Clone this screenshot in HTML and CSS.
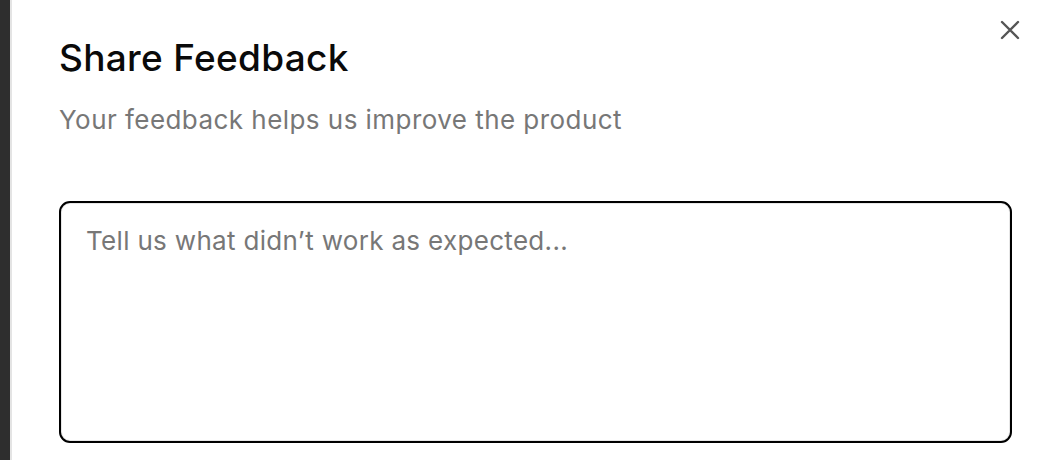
FILE: index.html
```html
<!DOCTYPE html>
<html lang="en">
<head>
<meta charset="utf-8">
<title>Share Feedback</title>
<link rel="stylesheet" href="styles.css">
</head>
<body>
<div class="page">
  <div class="backdrop"></div>
  <section class="modal">
    <button class="close" aria-label="Close">
      <svg width="22" height="22" viewBox="0 0 22 22" fill="none" stroke="#555" stroke-width="2.4" stroke-linecap="round">
        <path d="M3 3L19 19M19 3L3 19"/>
      </svg>
    </button>
    <h1 class="title">Share Feedback</h1>
    <p class="subtitle">Your feedback helps us improve the product</p>
    <textarea class="field" placeholder="Tell us what didn’t work as expected..."></textarea>
  </section>
</div>
</body>
</html>
```
FILE: styles.css
```css
* { box-sizing: border-box; }
html, body { margin: 0; padding: 0; background: #fff; }
body { font-family: Inter, "Noto Sans", sans-serif; }
.page { display: flex; height: 460px; overflow: hidden; }
.backdrop { width: 12px; flex: none; background: #2e2e2e; border-right: 2px solid #e4e4e4; }
.modal { flex: 1; position: relative; padding: 36px 35px 0 47px; }
.close { position: absolute; top: 19px; right: 37px; width: 22px; height: 22px; padding: 0; border: 0; background: none; }
.close svg { display: block; }
.title { margin: 0; font-size: 37px; line-height: 44px; font-weight: 500; letter-spacing: 0.3px; color: #0a0a0a; }
.subtitle { margin: 23px 0 0; font-size: 26px; line-height: 34px; font-weight: 400; letter-spacing: 0.45px; color: #777; }
.field { display: block; width: 953px; height: 242px; margin-top: 64px; border: 2px solid #000; border-radius: 11px; box-shadow: inset 0 0 0 1px #e6e6e6; padding: 21px 25px 11px; font-family: Inter, "Noto Sans", sans-serif; font-size: 26px; line-height: 34px; letter-spacing: 0.32px; color: #222; resize: none; outline: none; }
.field::placeholder { color: #777; }
```
